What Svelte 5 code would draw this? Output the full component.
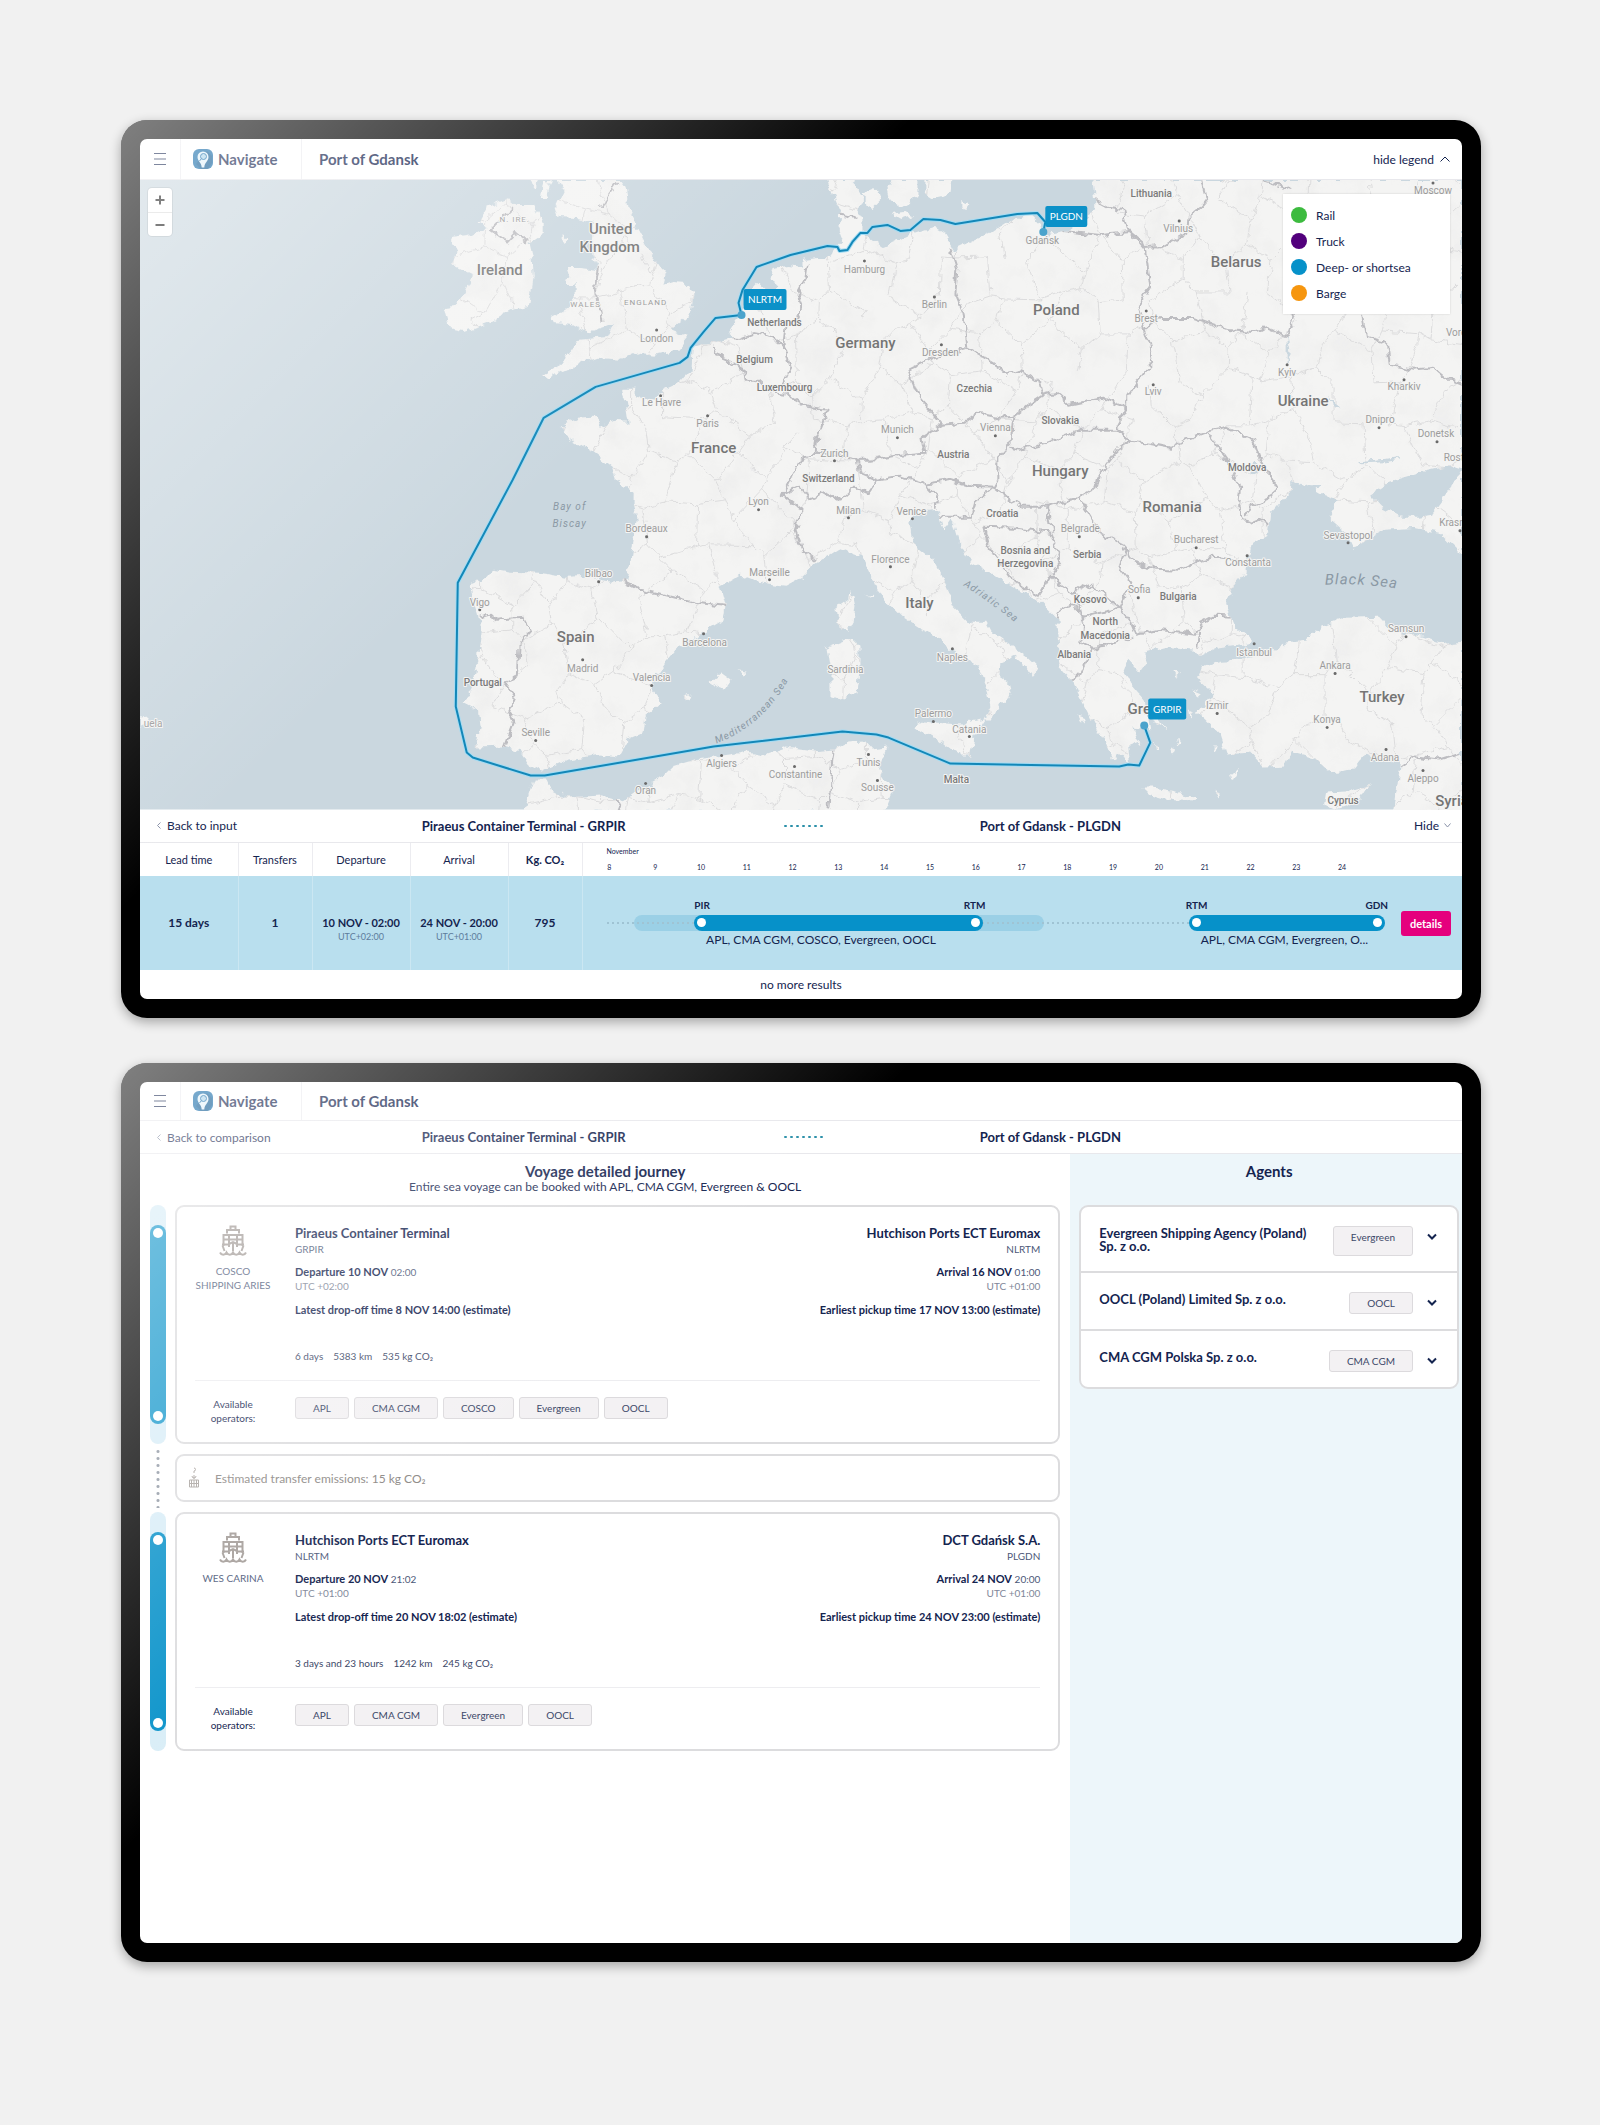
<script lang="ts">
  type Label = [text: string, x: number, y: number];

  const land: string[] = [
    // mainland Europe
    'M857 180L827 180L830 190L840 213L838 227L843 240L833 250L830 258L817 258L803 260L803 268L787 266L773 268L770 280L778 285L770 293L764 290L757 283L748 293L742 313L735 322L728 333L733 337L715 342L692 348L691 370L680 383L658 393L655 400L637 397L633 390L620 390L625 403L628 423L613 422L600 427L593 417L577 418L560 427L567 438L580 446L591 451L612 467L616 480L633 493L633 503L636 520L631 553L627 580L610 582L599 580L588 576L565 577L537 573L510 572L492 569L485 578L468 585L472 600L477 615L480 633L477 660L472 687L464 703L477 710L479 727L475 748L503 747L520 752L530 767L541 773L553 767L568 760L599 755L618 757L627 740L642 733L644 717L661 703L649 687L664 663L675 650L695 637L723 620L725 605L720 587L740 575L761 583L785 586L802 577L816 563L838 549L861 557L871 577L878 593L902 617L919 628L940 638L949 650L961 657L978 667L986 687L990 707L983 720L992 720L1000 703L1011 697L1007 683L999 677L1000 663L1014 657L1026 667L1033 677L1039 670L1026 657L992 633L986 622L969 622L954 607L943 580L933 560L912 543L909 523L916 512L937 510L943 530L950 520L955 526L961 547L971 563L1002 580L1023 593L1040 603L1057 620L1059 647L1060 667L1071 680L1081 700L1088 713L1094 726L1105 743L1112 760L1122 755L1131 767L1129 747L1140 743L1133 727L1150 730L1147 713L1147 703L1133 687L1123 673L1128 660L1140 673L1147 663L1143 653L1167 647L1195 650L1200 656L1216 648L1236 645L1253 642L1236 627L1226 605L1233 587L1245 573L1252 543L1269 533L1271 513L1288 493L1302 483L1319 493L1340 500L1329 518L1346 533L1353 548L1367 540L1384 530L1415 528L1439 533L1462 555L1462 180L1092 180L1095 200L1095 210L1070 230L1043 235L1040 223L1030 213L1005 223L990 233L953 250L943 233L933 227L913 233L883 247L868 236L863 235L863 220L857 210L863 197L853 183Z',
    // Great Britain
    'M556 180L563 190L555 207L558 217L577 218L593 222L591 244L592 257L597 270L580 268L567 268L570 278L563 283L575 283L575 297L567 308L550 317L553 323L572 325L587 333L603 328L614 323L607 337L577 340L568 353L560 365L542 375L547 379L557 373L570 370L583 363L597 358L620 360L637 353L653 355L678 350L688 337L677 333L670 330L690 313L693 293L687 283L672 282L663 285L665 273L652 257L640 233L628 210L625 187L620 180Z',
    // Ireland
    'M508 198L516 205L533 205L543 223L543 233L528 243L532 260L533 277L528 307L510 310L487 323L463 331L448 328L443 308L453 307L463 293L472 275L452 265L457 250L450 238L472 235L487 227L478 222L487 207L498 202Z',
    // small northern islands
    'M543 180L540 198L546 198L551 180Z M562 234L568 240L562 243Z M528 180L534 188L536 180Z',
    'M863 193L875 188L880 200L872 208L865 204Z M887 187L893 180L917 180L917 197L900 207L890 200Z M890 214L905 212L912 216L900 220Z M925 180L952 180L950 193L933 197L925 192Z M961 201L969 204L966 209L961 207Z',
    // western Mediterranean islands
    'M914 728L923 722L945 724L961 725L985 720L974 737L971 757L961 757L937 738L922 734Z',
    'M826 648L850 638L859 647L859 673L856 693L840 700L831 697L831 677L828 660Z M850 590L854 607L852 623L847 633L838 627L835 608L849 598Z',
    'M708 682L720 673L730 680L723 690L714 686Z M737 671L747 672L744 676Z M684 698L691 696L687 702Z M866 595L874 594L872 597Z',
    // Aegean and eastern Mediterranean islands
    'M1143 788L1153 788L1181 793L1198 797L1195 802L1164 800L1147 795Z M1231 776L1239 769L1233 780Z M1326 793L1346 792L1369 785L1357 803L1336 810L1324 805Z',
    'M1078 715L1086 718L1082 723Z M1150 712L1160 722L1166 730L1156 724Z M1176 740L1182 744L1178 748Z M1192 690L1202 694L1198 698Z M1189 711L1194 713L1190 718Z M1170 748L1175 750L1171 754Z M1212 748L1218 748L1214 752Z M1155 744L1160 750L1156 752Z M1174 672L1181 673L1176 676Z M1216 790L1218 798L1215 796Z',
    // Anatolia and the Levant
    'M1202 667L1220 661L1240 660L1271 653L1284 643L1305 640L1322 627L1346 618L1379 617L1391 630L1422 637L1446 645L1462 643L1462 812L1394 812L1398 780L1401 763L1384 760L1367 753L1353 770L1329 773L1315 760L1291 753L1284 767L1264 768L1250 753L1226 755L1219 733L1206 720L1198 713L1212 693L1197 680Z',
    // North Africa
    'M523 812L534 780L547 780L551 790L565 797L599 795L623 802L640 790L658 780L671 767L695 760L730 755L747 752L764 755L785 748L813 752L833 750L847 743L864 742L871 750L887 748L878 770L892 790L883 812Z',
    'M139 717L148 716L146 724L139 726Z'
  ];
  const landPath = land.join(' ');
  const azov = 'M1370 495L1390 482L1420 473L1450 466L1462 470L1455 482L1443 500L1432 515L1419 517L1401 517L1381 507Z';
  const inlets = 'M1255 462L1262 470L1250 476Z M1290 482L1300 486L1320 488L1300 492Z M1328 398L1340 408L1332 404Z M1400 458L1384 461L1360 462Z M1287 338L1287 362L1290 352Z';

  const borders: string[] = [
    '807,265 805,280 797,295 802,307 797,317 785,327 783,343 787,357 790,367 785,377 781,387 790,397 807,407 827,410 817,437 815,453 800,460 787,487 782,497',
    '712,347 715,355 727,360 743,370 745,380 757,380 770,392 785,394',
    '728,337 740,338 753,333 773,337 783,347',
    '815,453 833,455 857,460 860,473 877,480 900,476 925,484 950,480 970,486 993,487',
    '857,460 873,460 900,455 925,453 922,437 942,425',
    '942,425 920,400 908,370 933,358 967,348 993,363 1007,373 1020,370 1040,383 1043,395 1028,405 1013,417',
    '942,425 963,423 977,413 1000,418 1013,417 1010,443 997,457 997,480 993,487 1008,499 1022,507 1047,507 1078,498 1097,487 1100,472 1117,450 1130,442 1117,430 1080,430 1047,443 1020,450 1010,448',
    '950,248 957,270 955,293 963,313 967,347',
    '1043,395 1055,392 1070,405 1103,398 1127,408 1127,397 1140,378 1153,363 1150,345 1145,330 1137,307 1150,287 1147,262 1143,243 1130,232 1100,235 1063,231',
    '1095,200 1110,208 1123,210 1128,230 1143,248 1163,247 1187,233 1188,218 1200,208 1207,200 1202,180',
    '1145,328 1160,318 1193,318 1227,330 1253,332 1267,328 1287,337 1293,317 1300,300',
    '1363,315 1367,337 1387,343 1390,365 1413,370 1433,368 1445,378 1462,385',
    '1127,408 1117,427 1130,442 1150,444 1170,448 1185,440 1207,432 1227,428 1253,440 1260,460 1277,488 1272,497 1250,507 1246,517',
    '1207,432 1217,446 1227,460 1240,487 1238,505 1242,520 1252,523 1262,519 1269,526',
    '1078,498 1088,513 1100,533 1126,547 1119,567 1131,583 1119,608 1131,623 1136,635 1160,630 1195,635 1202,623 1215,616 1233,617',
    '1126,547 1133,563 1155,569 1181,570 1198,562 1215,557 1243,562',
    '983,527 1016,528 1050,533 1056,548 1060,563 1050,577 1038,597 1009,577 988,547 983,527',
    '1047,507 1052,532', '937,517 971,517 975,502 993,487',
    '1050,577 1073,593 1088,583 1100,592 1119,608 1100,612 1083,617 1072,604 1059,612 1055,622',
    '1073,593 1078,603 1083,623 1081,643 1092,648 1078,677 1070,680',
    '1092,648 1105,647 1131,637', '1200,632 1198,648',
    '782,495 799,487 809,500 826,493 840,500 854,487 868,493 877,480',
    '782,495 802,510 795,530 802,550 816,560', '925,484 937,497 935,508',
    '479,618 489,615 496,620 523,618 530,630 518,643 516,677 504,682 515,697 508,713 513,723 504,747',
    '621,580 640,590 671,597 695,603 725,606',
    '833,750 830,780 828,810', '613,798 620,810', '1401,767 1415,757 1439,760 1462,753',
    '513,207 490,230 507,242 515,233 527,243', '837,213 855,217', '598,268 595,290 602,323', '600,207 617,183',
    '1262,180 1275,184 1290,190'
  ];

  // Jittered honeycomb used for the faint province outlines.
  const hash = (a: number, b: number) => {
    const s = Math.sin(a * 127.1 + b * 311.7) * 43758.5453;
    return s - Math.floor(s);
  };
  const node = (c: number, r: number) => {
    const up = (c + r) % 2 === 0 ? -7 : 7;
    const x = 430 + c * 24 + (hash(c, r) - 0.5) * 22;
    const y = 170 + r * 42 + up + (hash(r + 40, c) - 0.5) * 24;
    return `${x.toFixed(0)} ${y.toFixed(0)}`;
  };
  let provinces = '';
  for (let r = 0; r < 16; r++) {
    for (let c = 0; c < 43; c++) {
      if (hash(c + 9, r + 5) > 0.12) provinces += `M${node(c, r)}L${node(c + 1, r)}`;
      if ((c + r) % 2 === 1) provinces += `M${node(c, r)}L${node(c, r + 1)}`;
    }
  }

  const route =
    '1144,726 1150,743 1139,766 1128,765 1119,767 950,764 888,738 876,735 842,732 713,747 544,776 530,776 472,758 466,753 455,707 457,583 512,480 543,418 595,387 679,363 687,357 690,348 703,332 715,318 741,315 738,303 742,290 756,267 790,255 827,246 837,247 839,251 847,250 852,242 860,233 867,233 872,227 887,225 900,231 910,230 923,219 940,220 955,224 1017,214 1037,213 1045,222 1043,232';

  const countries: Label[] = [
    ['Ireland', 499, 275], ['United', 610, 234], ['Kingdom', 609, 252], ['Germany', 865, 348], ['France', 713, 453],
    ['Poland', 1056, 315], ['Belarus', 1236, 267], ['Ukraine', 1303, 406], ['Hungary', 1060, 476], ['Romania', 1172, 512],
    ['Spain', 575, 642], ['Italy', 919, 608], ['Turkey', 1382, 702], ['Greece', 1151, 714], ['Syria', 1452, 806]
  ];
  const smallCountries: Label[] = [
    ['Lithuania', 1151, 197], ['Netherlands', 774, 326], ['Belgium', 754, 363], ['Luxembourg', 784, 391], ['Czechia', 974, 392],
    ['Slovakia', 1060, 424], ['Austria', 953, 458], ['Switzerland', 828, 482], ['Moldova', 1247, 471], ['Croatia', 1002, 517],
    ['Bosnia and', 1025, 554], ['Herzegovina', 1025, 567], ['Serbia', 1087, 558], ['Kosovo', 1090, 603], ['Bulgaria', 1178, 600],
    ['North', 1105, 625], ['Macedonia', 1105, 639], ['Albania', 1074, 658], ['Portugal', 482, 686], ['Malta', 956, 783], ['Cyprus', 1343, 804]
  ];
  // city label followed by the position of its dot
  const cities: [string, number, number, number, number][] = [
    ['Hamburg', 864, 273, 864, 261], ['Berlin', 934, 308, 934, 297], ['Dresden', 940, 356, 941, 345], ['Munich', 897, 433, 897, 438],
    ['Vienna', 995, 431, 995, 436], ['Zurich', 834, 457, 834, 461], ['London', 656, 342, 656, 330], ['Le Havre', 661, 406, 660, 396],
    ['Paris', 707, 427, 707, 416], ['Lyon', 758, 505, 758, 510], ['Milan', 848, 514, 848, 518], ['Venice', 911, 515, 912, 519],
    ['Bordeaux', 646, 532, 646, 537], ['Marseille', 769, 576, 769, 580], ['Florence', 890, 563, 890, 567], ['Bilbao', 598, 577, 598, 582],
    ['Vigo', 479, 606, 479, 610], ['Madrid', 582, 672, 582, 660], ['Barcelona', 704, 646, 703, 634], ['Valencia', 651, 681, 651, 686],
    ['Seville', 535, 736, 535, 741], ['Algiers', 721, 767, 721, 756], ['Constantine', 795, 778, 794, 767], ['Oran', 645, 794, 645, 784],
    ['Tunis', 868, 766, 868, 755], ['Sousse', 877, 791, 877, 781], ['Palermo', 933, 717, 933, 722], ['Catania', 969, 733, 969, 737],
    ['Naples', 952, 661, 952, 649], ['Gdańsk', 1042, 244, 1043, 232], ['Vilnius', 1178, 232, 1179, 221], ['Brest', 1146, 322, 1146, 311],
    ['Lviv', 1153, 395, 1153, 385], ['Kyiv', 1287, 376, 1287, 365], ['Kharkiv', 1404, 390, 1404, 380], ['Dnipro', 1380, 423, 1379, 428],
    ['Donetsk', 1436, 437, 1437, 442], ['Moscow', 1433, 194, 1433, 183], ['Krasnodar', 1462, 526, 1460, 531], ['Sevastopol', 1348, 539, 1348, 543],
    ['Bucharest', 1196, 543, 1196, 548], ['Constanta', 1248, 566, 1247, 556], ['Belgrade', 1080, 532, 1079, 537], ['Sofia', 1139, 593, 1138, 598],
    ['Samsun', 1406, 632, 1406, 637], ['Istanbul', 1254, 656, 1254, 644], ['Ankara', 1335, 669, 1335, 674], ['Izmir', 1217, 709, 1217, 714],
    ['Konya', 1327, 723, 1327, 728], ['Adana', 1385, 761, 1386, 750], ['Aleppo', 1423, 782, 1423, 771]
  ];
  const regions: Label[] = [['N. IRE.', 514, 222], ['WALES', 585, 307], ['ENGLAND', 645, 305]];
  const plainPlaces: Label[] = [['Sardinia', 845, 673], ['Voronezh', 1467, 336], ['Rostov', 1459, 461], ['uela', 152, 727]];
  const ports = [
    { code: 'NLRTM', x: 743, y: 289, w: 43, dx: 741, dy: 315 },
    { code: 'PLGDN', x: 1045, y: 206, w: 42, dx: 1043, dy: 232 },
    { code: 'GRPIR', x: 1148, y: 699, w: 38, dx: 1144, dy: 726 }
  ];

  const legend = [
    { name: 'Rail', tone: 'green' },
    { name: 'Truck', tone: 'purple' },
    { name: 'Deep- or shortsea', tone: 'blue' },
    { name: 'Barge', tone: 'orange' }
  ];

  // Timeline: one grid track per day, positions in days from the first track's left edge.
  const days = Array.from({ length: 17 }, (_, i) => i + 8);
  const span = 17;
  const pct = (d: number) => `${((d / span) * 100).toFixed(2)}%`;
  const legs = [
    { from: 2.35, to: 8.65, a: 'PIR', b: 'RTM', who: 'APL, CMA CGM, COSCO, Evergreen, OOCL' },
    { from: 13.15, to: 17.43, a: 'RTM', b: 'GDN', who: 'APL, CMA CGM, Evergreen, O...' }
  ];

  const voyages = [
    {
      ship: 'COSCO SHIPPING ARIES', tone: 'light',
      from: 'Piraeus Container Terminal', fromCode: 'GRPIR', dep: '10 NOV', depTime: '02:00', depZone: 'UTC +02:00', drop: 'Latest drop-off time 8 NOV 14:00 (estimate)',
      to: 'Hutchison Ports ECT Euromax', toCode: 'NLRTM', arr: '16 NOV', arrTime: '01:00', arrZone: 'UTC +01:00', pick: 'Earliest pickup time 17 NOV 13:00 (estimate)',
      stats: ['6 days', '5383 km', '535 kg CO₂'], operators: ['APL', 'CMA CGM', 'COSCO', 'Evergreen', 'OOCL']
    },
    {
      ship: 'WES CARINA', tone: 'deep',
      from: 'Hutchison Ports ECT Euromax', fromCode: 'NLRTM', dep: '20 NOV', depTime: '21:02', depZone: 'UTC +01:00', drop: 'Latest drop-off time 20 NOV 18:02 (estimate)',
      to: 'DCT Gdańsk S.A.', toCode: 'PLGDN', arr: '24 NOV', arrTime: '20:00', arrZone: 'UTC +01:00', pick: 'Earliest pickup time 24 NOV 23:00 (estimate)',
      stats: ['3 days and 23 hours', '1242 km', '245 kg CO₂'], operators: ['APL', 'CMA CGM', 'Evergreen', 'OOCL']
    }
  ];

  const agents = [
    { name: 'Evergreen Shipping Agency (Poland) Sp. z o.o.', line: 'Evergreen' },
    { name: 'OOCL (Poland) Limited Sp. z o.o.', line: 'OOCL' },
    { name: 'CMA CGM Polska Sp. z o.o.', line: 'CMA CGM' }
  ];
</script>

{#snippet topbar(withLegend: boolean)}
  <header class="topbar" class:compact={!withLegend}>
    <button class="menu" aria-label="Menu">
      <svg width="14" height="14" viewBox="0 0 14 14"><path d="M1 1.5h12M1 7h12M1 12.5h12" /></svg>
    </button>
    <a class="brand" href="#home">
      <svg width="20" height="20" viewBox="0 0 20 20">
        <rect width="20" height="20" rx="6" fill="#0f67a6" />
        <path d="M3 15L8 20H15L19 14V7L14 2Z" fill="#06477c" opacity=".5" />
        <path d="M10 2.500a5.500 5.500 0 0 0-5.500 5.500c0 4 4 5.500 4.200 10.500h2.600C11.500 13.500 15.500 12 15.500 8a5.500 5.500 0 0 0-5.500-5.500z" fill="#e3f2fa" />
        <circle cx="10.500" cy="7.500" r="3" fill="#a9d3ea" stroke="#0f67a6" />
        <path d="M8.500 9.500l-2 2.500" stroke="#0f67a6" />
      </svg>
      <span>Navigate</span>
    </a>
    <h1>Port of Gdansk</h1>
    {#if withLegend}
      <button class="hide-legend">hide legend
        <svg width="10" height="6" viewBox="0 0 10 6"><path d="M0.500 5.500L5 1L9.500 5.500" /></svg>
      </button>
    {/if}
  </header>
{/snippet}

{#snippet routebar(back: string, hide: boolean)}
  <div class="routebar">
    <button class="back"><svg width="4" height="7" viewBox="0 0 4 7"><path d="M3.500 0.500L0.500 3.500L3.500 6.500" /></svg>{back}</button>
    <strong>Piraeus Container Terminal - GRPIR</strong>
    <span class="dots">{#each Array(7) as _}<i></i>{/each}</span>
    <strong>Port of Gdansk - PLGDN</strong>
    {#if hide}
      <button class="hide">Hide <svg width="7" height="5" viewBox="0 0 7 5"><path d="M0.500 0.500L3.500 4L6.500 0.500" /></svg></button>
    {/if}
  </div>
{/snippet}

<main class="page">
  <section class="device">
    <div class="screen">
      {@render topbar(true)}
      <div class="map">
        <svg viewBox="139 180 1323 630" role="img" aria-label="Sea route from Piraeus to Gdansk">
          <defs>
            <filter id="coast" x="0" y="0" width="100%" height="100%">
              <feTurbulence type="fractalNoise" baseFrequency="0.12" numOctaves="2" seed="4" result="n" />
              <feDisplacementMap in="SourceGraphic" in2="n" scale="9" xChannelSelector="R" yChannelSelector="G" />
            </filter>
            <filter id="relief" x="0" y="0" width="100%" height="100%">
              <feTurbulence type="fractalNoise" baseFrequency="0.03" numOctaves="4" seed="9" />
              <feColorMatrix values="0 0 0 0 .55  0 0 0 0 .55  0 0 0 0 .58  0 0 0 .9 -.42" />
            </filter>
            <clipPath id="onland"><path d={landPath} /></clipPath>
            <path id="med" d="M716 744Q768 724 794 668" />
            <path id="adria" d="M963 586Q990 602 1026 632" />
            <path id="black" d="M1325 585Q1366 583 1410 591" />
          </defs>
          <rect x="139" y="180" width="1323" height="630" fill="#cad7df" />
          <g filter="url(#coast)">
            <path d={landPath} fill="#f4f4f3" />
            <g clip-path="url(#onland)">
              <rect x="420" y="180" width="1042" height="630" filter="url(#relief)" opacity=".25" />
              <path d={provinces} class="province" />
              {#each borders as b}<polyline points={b} class="border" />{/each}
            </g>
            <path d={azov} fill="#cad7df" />
            <path d={inlets} fill="#cad7df" stroke="#cad7df" />
          </g>
          {#each regions as [t, x, y]}<text class="region" {x} {y}>{t}</text>{/each}
          {#each plainPlaces as [t, x, y]}<text class="city" {x} {y}>{t}</text>{/each}
          {#each cities as [t, x, y, cx, cy]}
            <circle {cx} {cy} r="1.500" fill="#6a6a6a" /><text class="city" {x} {y}>{t}</text>
          {/each}
          {#each smallCountries as [t, x, y]}<text class="small" {x} {y}>{t}</text>{/each}
          {#each countries as [t, x, y]}<text class="country" {x} {y}>{t}</text>{/each}
          <text class="sea" x="569" y="510">Bay of</text>
          <text class="sea" x="569" y="527">Biscay</text>
          <text class="water"><textPath href="#med">Mediterranean Sea</textPath></text>
          <text class="water"><textPath href="#adria">Adriatic Sea</textPath></text>
          <text class="water big"><textPath href="#black">Black Sea</textPath></text>
          <polyline points={route} class="halo" />
          <polyline points={route} class="route" />
          {#each ports as p}
            <circle cx={p.dx} cy={p.dy} r="4" fill="#4ba3cc" />
            <rect x={p.x} y={p.y} width={p.w} height="21" rx="2" fill="#0c91c8" />
            <text class="port" x={p.x + p.w / 2} y={p.y + 14}>{p.code}</text>
          {/each}
        </svg>
        <div class="zoom">
          <button aria-label="Zoom in"><svg width="10" height="10" viewBox="0 0 10 10"><path d="M5 0.500v9M0.500 5h9" /></svg></button>
          <button aria-label="Zoom out"><svg width="10" height="10" viewBox="0 0 10 10"><path d="M0.500 5h9" /></svg></button>
        </div>
        <ul class="legend">
          {#each legend as l}<li><i class={l.tone}></i>{l.name}</li>{/each}
        </ul>
      </div>
      {@render routebar('Back to input', true)}
      <table>
        <colgroup><col class="c1" /><col class="c2" /><col class="c3" /><col class="c3" /><col class="c2" /><col /></colgroup>
        <thead>
          <tr>
            <th>Lead time</th><th>Transfers</th><th>Departure</th><th>Arrival</th><th class="strong">Kg. CO₂</th>
            <th class="time">
              <span class="month">November</span>
              <div class="days">{#each days as d}<span>{d}</span>{/each}</div>
            </th>
          </tr>
        </thead>
        <tbody>
          <tr>
            <td><b>15 days</b></td><td><b>1</b></td>
            <td class="date"><b>10 NOV - 02:00</b><small>UTC+02:00</small></td>
            <td class="date"><b>24 NOV - 20:00</b><small>UTC+01:00</small></td>
            <td><b>795</b></td>
            <td class="time">
              <div class="track">
                <div class="line">
                  <span class="buffer" style:left={pct(1.03)} style:width={pct(8.96)}></span>
                  <span class="wait" style:left={pct(0.45)} style:width={pct(12.7)}></span>
                  {#each legs as l}
                    <div class="leg" style:left={pct(l.from)} style:width={pct(l.to - l.from)}>
                      <div class="ends"><span>{l.a}</span><span>{l.b}</span></div>
                      <div class="bar"><i></i><i></i></div>
                      <span class="who">{l.who}</span>
                    </div>
                  {/each}
                </div>
                <button class="details">details</button>
              </div>
            </td>
          </tr>
        </tbody>
      </table>
      <p class="more">no more results</p>
    </div>
  </section>

  <section class="device">
    <div class="screen">
      {@render topbar(false)}
      {@render routebar('Back to comparison', false)}
      <div class="detail">
        <div class="journey">
          <div class="intro">
            <h2>Voyage detailed journey</h2>
            <p>Entire sea voyage can be booked with APL, CMA CGM, Evergreen &amp; OOCL</p>
          </div>
          {#each voyages as v, i}
            {#if i === 1}
              <div class="step">
                <div class="rail gap"></div>
                <div class="card transfer">
                  <svg width="12" height="22" viewBox="0 0 12 22">
                    <path d="M6 1a1.500 1.500 0 1 1 0 3v2M4 9a2 2 0 0 0 4 0M6 8v4M1.500 13h9v7h-9zM6 13v7M1.500 16.500h9M3.500 13v7M8.500 13v7" />
                  </svg>
                  Estimated transfer emissions: 15 kg CO₂
                </div>
              </div>
            {/if}
            <div class="step">
              <div class="rail"><div class="sail {v.tone}"><i></i><i></i></div></div>
              <article class="card">
                <div class="ports">
                  <div class="ship">
                    <svg width="28" height="32" viewBox="0 0 28 32">
                      <path d="M11.500 4V1.500h5V4M8 8.500V5h12v3.500" />
                      <path d="M3.500 10h21M4.500 10v11M23.500 10v11M10 10v12M18 10v12M4.500 14.500H23.500M3 19.500h7M18 19.500h7M10 19l4-2l4 2M14 18v8" />
                      <path d="M3.500 20.500L5.500 26M24.500 20.500L22.500 26" />
                      <path d="M1 27.500c1.500 3 5 3 6.500 0c1.500 3 5 3 6.500 0c1.500 3 5 3 6.500 0c1.500 3 5 3 6.500 0" />
                    </svg>
                    <span>{v.ship}</span>
                  </div>
                  <div class="port-info">
                    <h3>{v.from}</h3>
                    <p class="code">{v.fromCode}</p>
                    <p><b>Departure {v.dep}</b> {v.depTime}</p>
                    <p class="zone">{v.depZone}</p>
                    <p><b>{v.drop}</b></p>
                  </div>
                  <div class="port-info end">
                    <h3>{v.to}</h3>
                    <p class="code">{v.toCode}</p>
                    <p><b>Arrival {v.arr}</b> {v.arrTime}</p>
                    <p class="zone">{v.arrZone}</p>
                    <p><b>{v.pick}</b></p>
                  </div>
                </div>
                <div class="stats">{#each v.stats as s}<span>{s}</span>{/each}</div>
                <div class="operators">
                  <span class="caption">Available operators:</span>
                  <div class="chips">{#each v.operators as o}<span class="chip">{o}</span>{/each}</div>
                </div>
              </article>
            </div>
          {/each}
        </div>
        <aside>
          <h2>Agents</h2>
          <ul>
            {#each agents as a}
              <li>
                <b>{a.name}</b>
                <span class="chip">{a.line}</span>
                <button aria-label="Show {a.name}"><svg width="10" height="8" viewBox="0 0 10 8"><path d="M1 1.500L5 5.500L9 1.500" /></svg></button>
              </li>
            {/each}
          </ul>
        </aside>
      </div>
    </div>
  </section>
</main>

<style>
  :global(body) { margin: 0; background: #f1f1f1; }
  * { box-sizing: border-box; }
  .page {
    display: flex; flex-direction: column; gap: 45px;
    padding: 120px 119px 162px 121px;
    font-family: Lato, "Open Sans", sans-serif; font-size: 12px; color: #14244f;
  }
  button { font: inherit; color: inherit; background: none; border: 0; padding: 0; }
  h1, h2, h3, p, ul { margin: 0; padding: 0; list-style: none; }
  svg { display: block; fill: none; }

  .device {
    position: relative; padding: 19px; border-radius: 26px; background: #000;
    box-shadow: 0 4px 12px rgba(0, 0, 0, 0.32);
  }
  .device::after {
    content: ""; position: absolute; inset: 0; border-radius: 26px; pointer-events: none;
    background: linear-gradient(135deg, rgba(255, 255, 255, 0.5), rgba(255, 255, 255, 0) 560px);
  }
  .screen {
    display: flex; flex-direction: column; aspect-ratio: 1323 / 861;
    background: #fff; border-radius: 7px; overflow: hidden;
  }

  .topbar { display: flex; align-items: stretch; height: 41px; flex: none; border-bottom: 1px solid #e8e8ec; }
  .topbar.compact { height: 39px; }
  .menu { width: 41px; display: flex; align-items: center; justify-content: center; border-right: 1px solid #ececf0; }
  .menu svg { stroke: #14244f; stroke-width: 1; }
  .brand {
    display: flex; align-items: center; gap: 5px; width: 121px; padding-left: 12px;
    border-right: 1px solid #ececf0; color: inherit; text-decoration: none; font-size: 15px; font-weight: 700;
  }
  h1 { align-self: center; padding-left: 17px; font-size: 15px; font-weight: 700; }
  .hide-legend { display: flex; align-items: center; gap: 6px; margin-left: auto; padding-right: 12px; }
  .hide-legend svg { stroke: #14244f; }

  .map { position: relative; flex: none; }
  .map > svg { width: 100%; height: auto; font-family: Roboto, sans-serif; text-anchor: middle; }
  .province { stroke: #dcdcdd; stroke-width: 1; }
  .border { stroke: #bdbdc1; stroke-width: 2; stroke-linejoin: round; }
  .map text { stroke: #f4f4f3; stroke-width: 2; paint-order: stroke; stroke-linejoin: round; }
  .country { font-size: 15px; font-weight: 500; fill: #757575; }
  .small { font-size: 10px; font-weight: 500; fill: #7a7a7a; }
  .city { font-size: 10px; fill: #9c9c9c; }
  .region { font-size: 8px; fill: #999; letter-spacing: 1px; }
  .map .sea, .map .water { font-style: italic; fill: #8b99a5; stroke: none; letter-spacing: 1px; font-size: 10px; }
  .map .water { text-anchor: start; }
  .map .big { font-size: 15px; }
  .map .port { font-family: Lato, sans-serif; font-size: 10px; fill: #fff; stroke: none; }
  .halo { stroke: #a5dcf3; stroke-width: 4; stroke-linejoin: round; }
  .route { stroke: #1387b8; stroke-width: 2; stroke-linejoin: round; }

  .zoom {
    position: absolute; left: 8px; top: 8px; width: 24px; background: #fff; border-radius: 4px;
    box-shadow: 0 0 0 1px rgba(0, 0, 0, 0.1);
  }
  .zoom button { display: flex; align-items: center; justify-content: center; width: 24px; height: 24px; }
  .zoom button + button { border-top: 1px solid #ddd; }
  .zoom svg { stroke: #222; stroke-width: 2; }
  .legend {
    position: absolute; right: 12px; top: 14px; width: 167px; padding: 8px;
    background: #fff; box-shadow: 0 0 2px rgba(0, 0, 0, 0.15);
  }
  .legend li { display: flex; align-items: center; gap: 9px; height: 26px; }
  .legend i { width: 16px; height: 16px; border-radius: 50%; }
  .green { background: #3dbb3f; }
  .purple { background: #52007c; }
  .blue { background: #0691c9; }
  .orange { background: #f6960f; }

  .routebar {
    display: grid; grid-template-columns: 260fr 248fr 312fr 182fr 321fr; align-items: center;
    height: 33px; flex: none; border-bottom: 1px solid #e8e8ec;
  }
  .routebar strong { justify-self: center; font-size: 13px; white-space: nowrap; }
  .back { display: flex; align-items: center; gap: 6px; padding-left: 17px; }
  .back svg, .hide svg { stroke: #8a92a8; }
  .dots { display: flex; gap: 3px; justify-self: center; }
  .dots i { width: 3px; height: 2px; border-radius: 1px; background: #2a8fa8; }
  .hide { display: flex; align-items: center; gap: 5px; justify-self: end; padding-right: 11px; }

  table { width: 100%; table-layout: fixed; border-collapse: collapse; flex: none; }
  .c1 { width: 98px; }
  .c2 { width: 74px; }
  .c3 { width: 98px; }
  th { height: 33px; padding: 0; font-size: 11px; font-weight: 400; border-right: 1px solid #ececf0; }
  th.strong { font-weight: 700; }
  td { height: 94px; padding: 0; text-align: center; background: #b9dfee; border-right: 1px solid #cbe7f2; }
  th.time, td.time { border-right: 0; padding: 0 97px 0 4px; text-align: left; }
  .month { display: block; padding-left: 20px; font-size: 7px; line-height: 8px; }
  .days { display: grid; grid-template-columns: repeat(17, 1fr); padding-top: 8px; font-size: 7px; line-height: 8px; text-align: center; }
  .date b { font-size: 11px; display: block; padding-top: 14px; line-height: 14px; white-space: nowrap; }
  .date small { display: block; font-size: 9px; line-height: 14px; color: #5d7c9c; }
  .track { position: relative; }
  .line { position: relative; height: 16px; }
  .buffer { position: absolute; top: 0; height: 16px; border-radius: 8px; background: #9bd0e6; }
  .wait { position: absolute; top: 7px; height: 2px; background: repeating-linear-gradient(90deg, #9fc3d3 0 2px, transparent 2px 5px); }
  .leg { position: absolute; top: -26px; }
  .ends { display: flex; justify-content: space-between; align-items: flex-end; height: 26px; font-size: 10px; font-weight: 700; line-height: 20px; }
  .ends span { display: flex; justify-content: center; width: 16px; }
  .bar { display: flex; justify-content: space-between; align-items: center; height: 16px; padding: 0 3px; border-radius: 8px; background: #0691c9; }
  .bar i { width: 9px; height: 9px; border-radius: 50%; background: #fff; }
  .who { display: block; padding-left: 12px; line-height: 18px; white-space: nowrap; }
  .details {
    position: absolute; left: calc(100% + 36px); top: -4px; width: 50px; height: 25px;
    border-radius: 3px; background: #e5007d; color: #fff; font-size: 11px; font-weight: 700;
  }
  .more { margin: auto; }

  .detail { display: grid; grid-template-columns: 931fr 392fr; flex: 1; }
  .journey { display: flex; flex-direction: column; gap: 10px; padding: 9px 10px; }
  .intro { height: 32px; text-align: center; }
  h2 { font-size: 15px; line-height: 17px; font-weight: 700; }
  .intro p { line-height: 13px; }
  .step { display: flex; gap: 9px; }
  .rail { display: flex; width: 16px; flex: none; padding: 20px 0; border-radius: 8px; background: #d8edf7; }
  .sail { display: flex; flex-direction: column; justify-content: space-between; align-items: center; width: 16px; padding: 3px 0; border-radius: 8px; background: #0691c9; }
  .light { background: #1698cc; }
  .sail i { width: 10px; height: 10px; border-radius: 50%; background: #fff; }
  .rail.gap {
    border-radius: 0; margin: -6px 0; padding: 0;
    background: radial-gradient(circle, #8f97a3 1px, transparent 2px) 0 0 / 16px 7px;
  }
  .card { flex: 1; border: 2px solid #dcdcde; border-radius: 9px; background: #fff; padding: 18px 18px 17px; }
  .transfer { display: flex; align-items: center; gap: 15px; height: 48px; padding: 0 11px; color: #8b8784; }
  .transfer svg { stroke: #a8a29e; stroke-width: 1; }
  .ports { display: grid; grid-template-columns: 76px 1fr 1fr; }
  .ship { display: flex; flex-direction: column; align-items: center; gap: 7px; text-align: center; font-size: 10px; line-height: 14px; color: #4c5878; }
  .ship svg { stroke: #a39c98; stroke-width: 2; }
  .port-info { padding-left: 24px; font-size: 10px; line-height: 14px; }
  .port-info.end { padding-left: 0; text-align: right; }
  h3 { font-size: 13px; line-height: 17px; font-weight: 700; }
  .port-info p { height: 14px; color: #4c5878; }
  .port-info b { font-size: 11px; line-height: 14px; color: #14244f; }
  .port-info .code { margin-bottom: 9px; }
  .port-info .zone { color: #7f8799; margin-bottom: 10px; }
  .stats { display: flex; gap: 10px; padding: 32px 0 17px 100px; font-size: 10px; line-height: 14px; color: #3c4868; border-bottom: 1px solid #ededf0; }
  .operators { display: grid; grid-template-columns: 76px 1fr; column-gap: 24px; align-items: start; padding-top: 16px; font-size: 10px; line-height: 14px; }
  .caption { text-align: center; padding: 0 10px; }
  .chips { display: flex; gap: 5px; }
  .chip {
    padding: 3px 17px; min-height: 22px; border: 1px solid #dcdadd; border-radius: 3px;
    background: #f3f1f3; font-size: 10px; line-height: 14px; color: #3c4868; white-space: nowrap;
  }

  aside { padding: 9px 3px 9px 9px; background: #edf6fa; }
  aside h2 { text-align: center; }
  aside ul { margin-top: 25px; border: 2px solid #dcdcde; border-radius: 9px; background: #fff; }
  aside li { display: flex; padding: 19px 20px 15px 18px; }
  aside li + li { border-top: 2px solid #dcdcde; }
  aside b { flex: 1; padding: 1px 14px 3px 0; font-size: 13px; line-height: 13px; }
  aside .chip { margin-right: 14px; }
  aside button { align-self: flex-start; padding-top: 7px; }
  aside button svg { stroke: #14244f; stroke-width: 2; }
</style>
